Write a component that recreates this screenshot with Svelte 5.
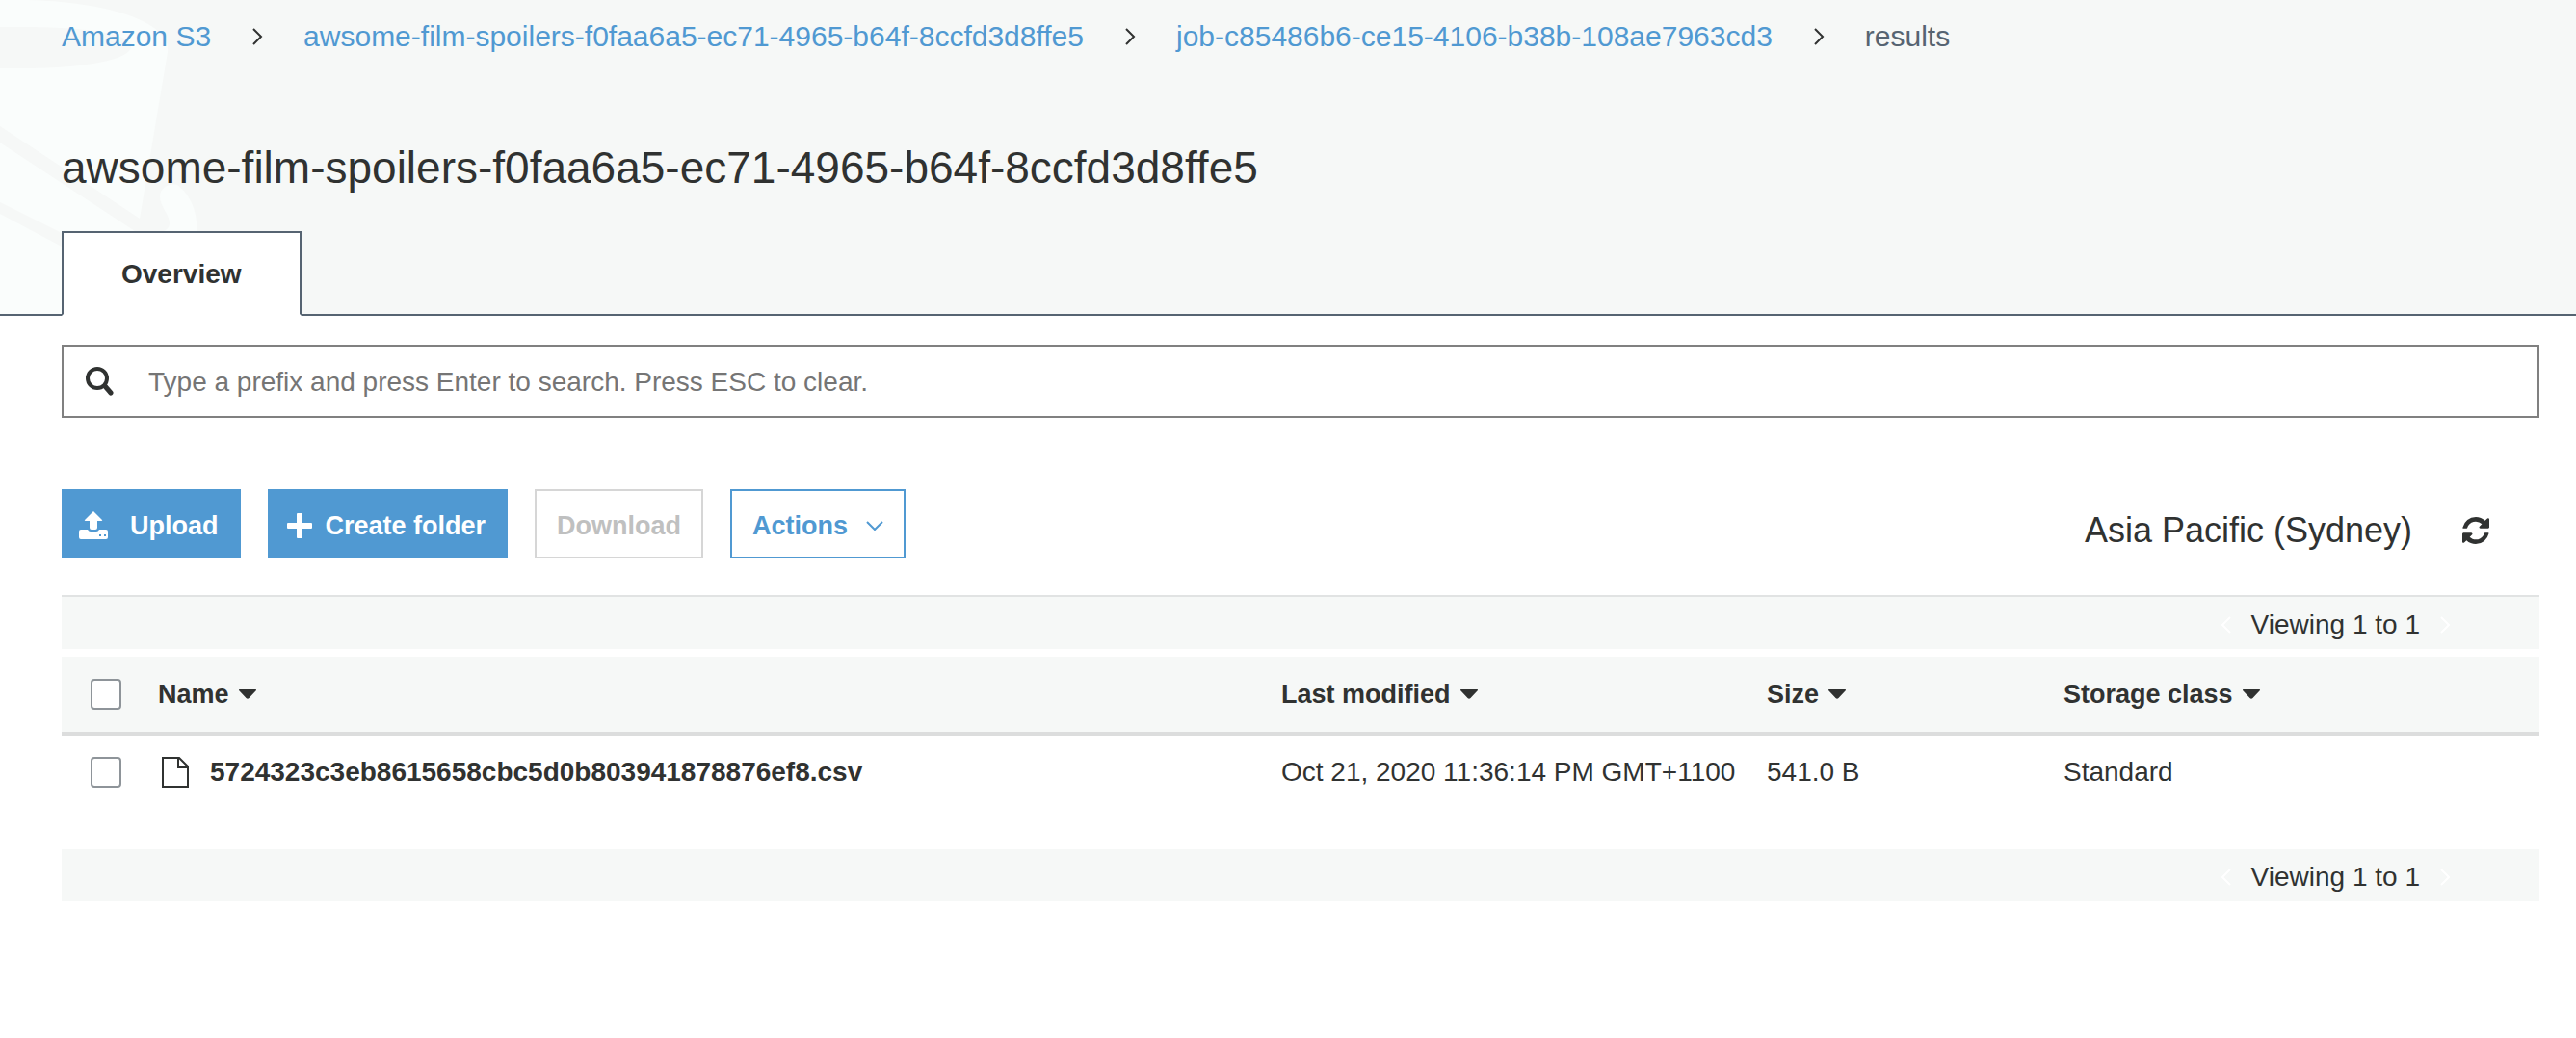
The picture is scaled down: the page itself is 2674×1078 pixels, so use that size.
<script>
  const crumbs = [
    { label: 'Amazon S3', href: '#s3' },
    { label: 'awsome-film-spoilers-f0faa6a5-ec71-4965-b64f-8ccfd3d8ffe5', href: '#bucket' },
    { label: 'job-c85486b6-ce15-4106-b38b-108ae7963cd3', href: '#job' }
  ];
  const columns = ['Name', 'Last modified', 'Size', 'Storage class'];
  const files = [
    {
      name: '5724323c3eb8615658cbc5d0b803941878876ef8.csv',
      modified: 'Oct 21, 2020 11:36:14 PM GMT+1100',
      size: '541.0 B',
      storage: 'Standard'
    }
  ];
</script>

{#snippet pager(top)}
  <div class="pager" class:top>
    <button class="page" aria-label="Previous page" disabled>
      <svg width="12" height="18" viewBox="0 0 12 18"><path d="M10 1 2 9l8 8" /></svg>
    </button>
    <span>Viewing 1 to 1</span>
    <button class="page" aria-label="Next page" disabled>
      <svg width="12" height="18" viewBox="0 0 12 18"><path d="m2 1 8 8-8 8" /></svg>
    </button>
  </div>
{/snippet}

<header>
  <svg class="bucket" width="210" height="326" viewBox="0 0 210 326" aria-hidden="true">
    <path class="pale" d="M0 0h20c80 0 158 20 154 54L145 227l-20 99H0z" />
    <path class="shade" d="M0 28h25c60 0 111 6 111 20 0 16-60 23-111 23H0z" />
    <path class="shade" d="M0 131 145 227l30 10v3h-35L0 148zM0 210l64 32v14L0 222z" />
    <path class="pale" d="M184 192c14 10 22 30 20 50h-42c8-1 14-4 14-10 0-10-10-17-10-28 0-8 8-14 18-12z" />
  </svg>
  <nav aria-label="Breadcrumb">
    {#each crumbs as crumb}
      <a href={crumb.href}>{crumb.label}</a>
      <svg width="12" height="18" viewBox="0 0 12 18" aria-hidden="true"><path d="m2 1 8 8-8 8" /></svg>
    {/each}
    <span>results</span>
  </nav>
  <h1>awsome-film-spoilers-f0faa6a5-ec71-4965-b64f-8ccfd3d8ffe5</h1>
  <div class="tabs" role="tablist">
    <button class="tab" role="tab" aria-selected="true">Overview</button>
  </div>
</header>

<main>
  <label class="search">
    <svg width="30" height="30" viewBox="0 0 30 30" aria-hidden="true">
      <circle cx="13" cy="12" r="10" /><path d="m21 20 6 7" />
    </svg>
    <input type="text" aria-label="Search by prefix" placeholder="Type a prefix and press Enter to search. Press ESC to clear." />
  </label>

  <div class="toolbar">
    <button class="btn primary upload">
      <svg width="30" height="30" viewBox="0 0 30 30" aria-hidden="true">
        <path d="m15 0 9 9q1 1-1 1h-4v7q0 2-2 2h-4q-2 0-2-2v-7H7q-2 0-1-1z" />
        <path fill-rule="evenodd" d="M2 19h7q1 2 3 2h6q2 0 3-2h7q2 0 2 2v6q0 2-2 2H2q-2 0-2-2v-6q0-2 2-2zm19 5v2h2v-2zm5 0v2h2v-2z" />
      </svg>
      Upload
    </button>
    <button class="btn primary create">
      <svg width="26" height="26" viewBox="0 0 26 26" aria-hidden="true">
        <path d="M11 0h4q1 0 1 1v9h9q1 0 1 1v4q0 1-1 1h-9v9q0 1-1 1h-4q-1 0-1-1v-9H1q-1 0-1-1v-4q0-1 1-1h9V1q0-1 1-1z" />
      </svg>
      Create folder
    </button>
    <button class="btn" disabled>Download</button>
    <button class="btn outline">
      Actions
      <svg width="18" height="10" viewBox="0 0 18 10" aria-hidden="true"><path d="m1 1 8 8 8-8" /></svg>
    </button>
    <div class="region">
      <span>Asia Pacific (Sydney)</span>
      <button class="refresh" aria-label="Refresh">
        <svg width="28" height="28" viewBox="0 0 1536 1536" aria-hidden="true">
          <path d="M1511 928q0 5-1 7-64 268-268 434.500T764 1536q-146 0-282.500-55T238 1324l-129 129q-19 19-45 19t-45-19-19-45V960q0-26 19-45t45-19h448q26 0 45 19t19 45-19 45l-137 137q71 66 161 102t187 36q134 0 250-65t186-179q11-17 53-117 8-23 30-23h192q13 0 22.500 9.500t9.500 22.500zm25-800v448q0 26-19 45t-45 19h-448q-26 0-45-19t-19-45 19-45l138-138Q969 256 768 256q-134 0-250 65T332 500q-11 17-53 117-8 23-30 23H50q-13 0-22.500-9.500T18 608v-7q65-268 270-434.500T768 0q146 0 284 55.500T1297 212l130-129q19-19 45-19t45 19 19 45z" />
        </svg>
      </button>
    </div>
  </div>

  {@render pager(true)}
  <table>
    <thead>
      <tr>
        <th class="check"><input type="checkbox" aria-label="Select all" /></th>
        {#each columns as column}
          <th>
            <button class="sort">
              {column}
              <svg width="18" height="10" viewBox="0 0 18 10" aria-hidden="true"><path d="M1 0h16q2 0 .5 1.500l-7 7.500q-1.500 1.500-3 0l-7-7.500Q-1 0 1 0z" /></svg>
            </button>
          </th>
        {/each}
      </tr>
    </thead>
    <tbody>
      {#each files as file}
        <tr>
          <td class="check"><input type="checkbox" aria-label="Select {file.name}" /></td>
          <td>
            <a class="file" href="#file">
              <svg width="28" height="32" viewBox="0 0 28 32" aria-hidden="true"><path d="M1 1h17l9 9v21H1zM17 1v10h10" /></svg>
              {file.name}
            </a>
          </td>
          <td>{file.modified}</td>
          <td>{file.size}</td>
          <td>{file.storage}</td>
        </tr>
      {/each}
    </tbody>
  </table>
  {@render pager(false)}
</main>

<style>
  :global(body) {
    margin: 0;
    background: #fff;
    color: #303231;
    font: 28px/36px "Liberation Sans", Arial, sans-serif;
  }
  button,
  input {
    margin: 0;
    padding: 0;
    border: 0;
    background: none;
    color: inherit;
    font: inherit;
  }
  a {
    color: #5099d2;
    text-decoration: none;
  }
  svg {
    flex: none;
    fill: currentColor;
  }
  header {
    position: relative;
    padding: 20px 64px 0;
    border-bottom: 2px solid #566472;
    background: #f6f8f7;
  }
  .bucket {
    position: absolute;
    top: 0;
    left: 0;
  }
  .pale {
    fill: #fafdfc;
  }
  .shade {
    fill: #f6f8f7;
  }
  nav {
    position: relative;
    display: flex;
    align-items: center;
    gap: 42px;
    color: #566472;
    font-size: 30px;
  }
  nav svg,
  .search svg,
  .outline svg,
  .page svg,
  .file svg {
    fill: none;
    stroke: currentColor;
    stroke-width: 2;
  }
  nav svg {
    color: #303231;
  }
  h1 {
    position: relative;
    margin: 90px 0 38px;
    font-size: 46px;
    line-height: 56px;
    font-weight: 400;
  }
  .tabs {
    position: relative;
    display: flex;
    margin-bottom: -2px;
  }
  .tab {
    height: 88px;
    padding: 2px 60px 0;
    border: 2px solid #566472;
    border-bottom-color: #fff;
    background: #fff;
    font-weight: 700;
  }
  main {
    padding: 30px 38px 0 64px;
  }
  .search {
    display: flex;
    align-items: center;
    gap: 36px;
    height: 72px;
    padding: 0 22px;
    border: 2px solid #808080;
  }
  .search svg {
    stroke-width: 4;
  }
  .search path {
    stroke-width: 5;
    stroke-linecap: round;
  }
  .search input {
    flex: 1;
    padding-top: 2px;
    outline: 0;
  }
  .search input::placeholder {
    color: #757575;
    opacity: 1;
  }
  .toolbar {
    display: flex;
    gap: 28px;
    margin: 74px 0 38px;
  }
  .btn {
    display: flex;
    align-items: center;
    height: 72px;
    padding: 4px 21px 0;
    box-sizing: border-box;
    border: 2px solid;
    font-size: 27px;
    font-weight: 700;
  }
  .btn:disabled {
    border-color: #d6d6d6;
    color: #bfc0c0;
  }
  .primary {
    border-color: #5099d2;
    background: #5099d2;
    color: #fff;
  }
  .upload {
    gap: 23px;
    padding-left: 16px;
  }
  .create {
    gap: 14px;
    padding-left: 18px;
  }
  .outline {
    gap: 19px;
    color: #5099d2;
  }
  .region {
    display: flex;
    align-items: center;
    gap: 52px;
    margin-left: auto;
    padding: 14px 52px 0 0;
    font-size: 36px;
  }
  .refresh {
    display: flex;
  }
  .pager {
    display: flex;
    align-items: center;
    justify-content: flex-end;
    gap: 20px;
    height: 54px;
    padding: 4px 92px 0 0;
    box-sizing: border-box;
    background: #f6f8f7;
  }
  .pager.top {
    height: 56px;
    border-top: 2px solid #e1e3e3;
    margin-bottom: 8px;
  }
  .page {
    display: flex;
    color: #fff;
  }
  table {
    width: 100%;
    margin-bottom: 42px;
    border-spacing: 0;
    table-layout: fixed;
    text-align: left;
  }
  th,
  td {
    padding: 0;
    box-sizing: border-box;
    vertical-align: middle;
    white-space: nowrap;
  }
  th {
    height: 82px;
    border-bottom: 4px solid #dcdddd;
    background: #f6f8f7;
  }
  td {
    height: 76px;
  }
  th:nth-child(1) {
    width: 100px;
  }
  th:nth-child(3) {
    width: 504px;
  }
  th:nth-child(4) {
    width: 308px;
  }
  th:nth-child(5) {
    width: 494px;
  }
  .check input {
    display: block;
    width: 32px;
    height: 32px;
    margin-left: 30px;
    box-sizing: border-box;
    appearance: none;
    border: 2px solid #8e9499;
    border-radius: 4px;
    background: #fff;
  }
  .sort,
  .file {
    display: flex;
    align-items: center;
    font-weight: 700;
  }
  .sort {
    gap: 10px;
    font-size: 27px;
  }
  .file {
    gap: 22px;
    padding-left: 4px;
    color: #303231;
  }
</style>
